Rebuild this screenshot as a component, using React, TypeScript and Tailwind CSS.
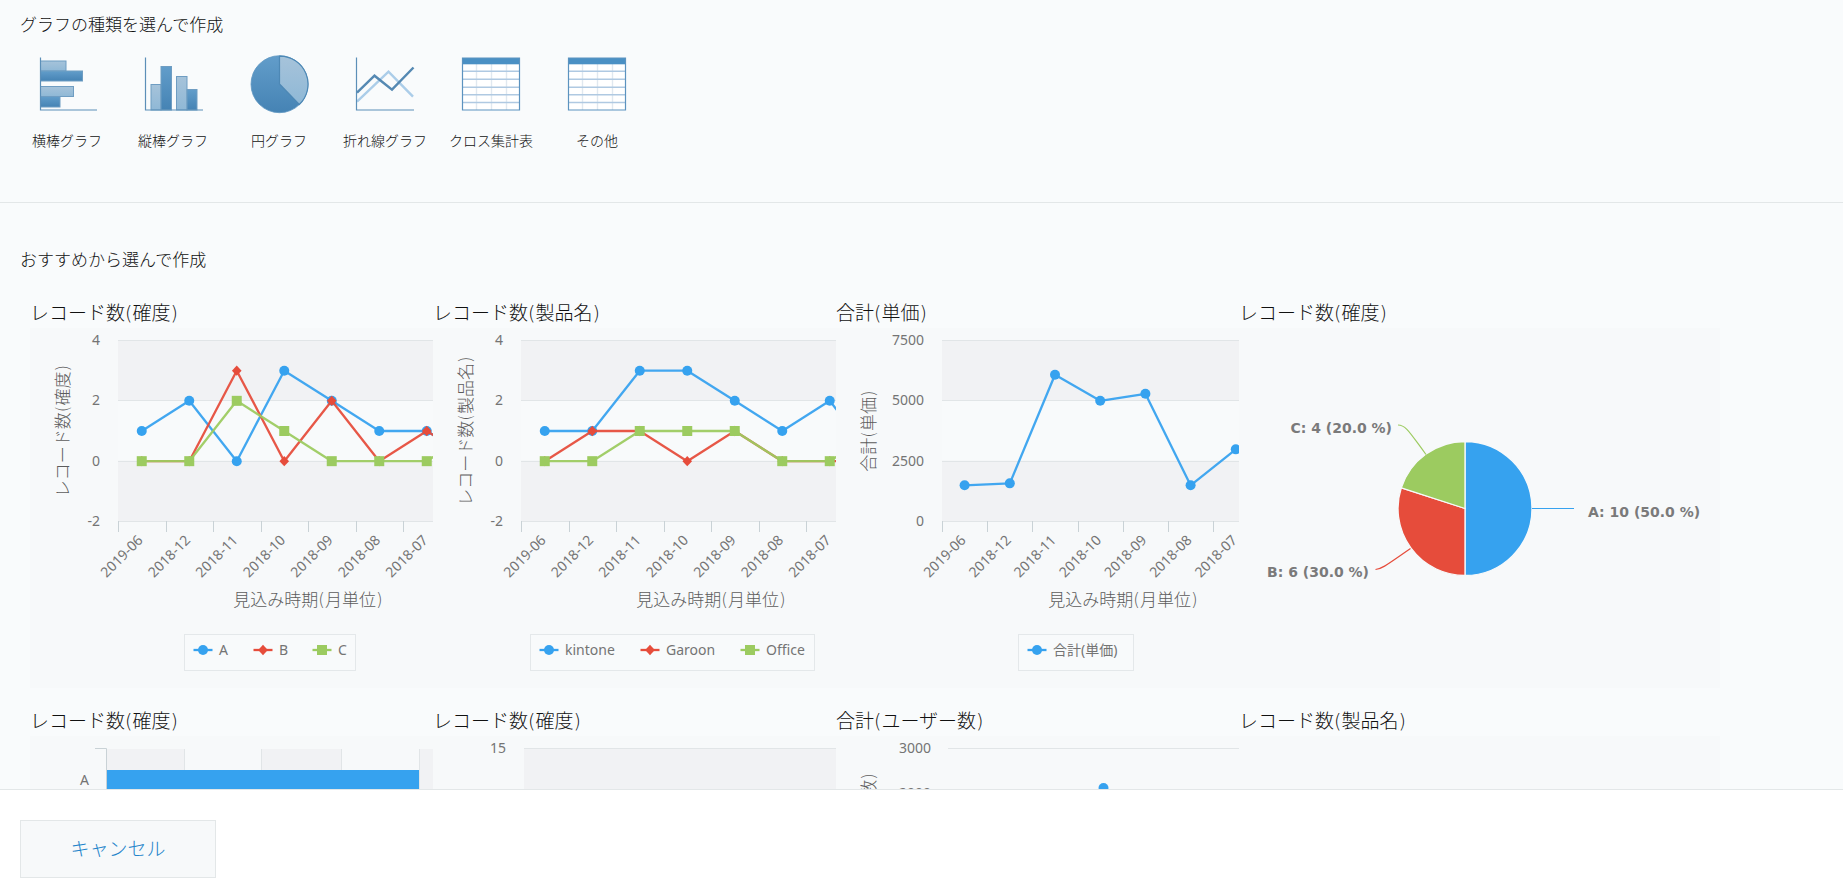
import React from "react";

const BLUE = "#36a2ef";
const RED = "#e64c3b";
const GREEN = "#9ccb60";

const UI_FONT = "font-['Noto_Sans','Noto_Sans_CJK_JP',sans-serif]";
const WIDE_FONT = "font-['DejaVu_Sans','Noto_Sans_CJK_JP',sans-serif]";

type MarkerShape = "circle" | "diamond" | "square";
type Series = { name: string; color: string; shape: MarkerShape; values: number[] };

function Marker({ shape, x, y, color }: { shape: MarkerShape; x: number; y: number; color: string }) {
  if (shape === "circle") return <circle cx={x} cy={y} r={5} fill={color} />;
  if (shape === "square") return <rect x={x - 5} y={y - 5} width={10} height={10} fill={color} />;
  return <path d={`M${x} ${y - 5.2}L${x + 4.8} ${y}L${x} ${y + 5.2}L${x - 4.8} ${y}Z`} fill={color} />;
}

const MONTHS = ["2019-06", "2018-12", "2018-11", "2018-10", "2018-09", "2018-08", "2018-07"];
const TOP = 12;
const PLOT_HEIGHT = 181;

function ChartSvg({ label, children }: { label: string; children: React.ReactNode }) {
  return (
    <svg width="481" height="360" viewBox="-2 0 481 360" role="img" aria-label={label} className={`block shrink-0 ${UI_FONT}`}>
      {children}
    </svg>
  );
}

type LineChartProps = {
  yTitle: string;
  left: number;
  step: number;
  labelRight: number;
  ticks: number[];
  titleX: number;
  legend: { x: number; width: number; items: number[] };
  series: Series[];
};

function LineChart({ yTitle, left, step, labelRight, ticks, titleX, legend, series }: LineChartProps) {
  const max = ticks[0];
  const min = ticks[ticks.length - 1];
  const yOf = (v: number) => TOP + ((max - v) / (max - min)) * PLOT_HEIGHT;
  const xOf = (i: number) => left + step * (i + 0.5);
  return (
    <ChartSvg label={yTitle}>
      <rect x={left} y={yOf(ticks[0])} width={420} height={PLOT_HEIGHT / 3} fill="#f1f2f4" />
      <rect x={left} y={yOf(ticks[1])} width={420} height={PLOT_HEIGHT / 3} fill="#f8fafb" />
      <rect x={left} y={yOf(ticks[2])} width={420} height={PLOT_HEIGHT / 3} fill="#f1f2f4" />
      {ticks.map((t) => (
        <g key={t}>
          <line x1={left} x2={479} y1={Math.round(yOf(t)) + 0.5} y2={Math.round(yOf(t)) + 0.5} stroke="#e1e5e7" />
          <text x={labelRight} y={Math.round(yOf(t)) + 5} textAnchor="end" fontSize={14} fill="#747474">
            {t}
          </text>
        </g>
      ))}
      {MONTHS.map((m, i) => (
        <g key={m}>
          <line x1={Math.round(left + step * i) + 0.5} x2={Math.round(left + step * i) + 0.5} y1={193} y2={204} stroke="#c9d2d6" />
          <text x={xOf(i) + 2} y={213} textAnchor="end" fontSize={14} fill="#747474" transform={`rotate(-45 ${xOf(i) + 2} 213)`}>
            {m}
          </text>
        </g>
      ))}
      {series.map((s) => (
        <g key={s.name}>
          <polyline
            points={s.values.map((v, i) => `${xOf(i)},${yOf(v) + 0.5}`).join(" ")}
            fill="none"
            stroke={s.color}
            strokeWidth={2.3}
            strokeOpacity={0.94}
            strokeLinejoin="round"
          />
          {s.values.map((v, i) => (
            <Marker key={i} shape={s.shape} x={xOf(i)} y={yOf(v) + 0.5} color={s.color} />
          ))}
        </g>
      ))}
      <g className={WIDE_FONT} fontSize={17} fontWeight={300} textAnchor="middle" fill="#5c5c5c">
        <text x={37} y={103} transform="rotate(-90 37 103)">
          {yTitle}
        </text>
        <text x={titleX} y={278}>
          見込み時期(月単位)
        </text>
      </g>
      <rect x={legend.x + 0.5} y={306.5} width={legend.width} height={36} fill="#f8fafb" stroke="#e4e8ea" />
      {series.map((s, i) => (
        <g key={s.name}>
          <line x1={legend.items[i] - 9.5} x2={legend.items[i] + 9.5} y1={322} y2={322} stroke={s.color} strokeWidth={2.3} />
          <Marker shape={s.shape} x={legend.items[i]} y={322} color={s.color} />
          <text x={legend.items[i] + 16} y={327} fontSize={14} fill="#747474">
            {s.name}
          </text>
        </g>
      ))}
    </ChartSvg>
  );
}

function PieChart() {
  return (
    <ChartSvg label="レコード数(確度)">
      <g stroke="#f7f9fa" strokeWidth={1.3}>
        <path d="M224 180.500V113.500A67 67 0 0 1 224 247.500Z" fill={BLUE} />
        <path d="M224 180.500V247.500A67 67 0 0 1 160.300 159.800Z" fill={RED} />
        <path d="M224 180.500L160.300 159.800A67 67 0 0 1 224 113.500Z" fill={GREEN} />
      </g>
      <g fill="none" strokeWidth={1.2}>
        <path d="M291 180.500H333" stroke={BLUE} />
        <path d="M134.500 241.500C141 241 147 236 169.500 220.500" stroke={RED} />
        <path d="M157 97C165 97 169 105 185 126.500" stroke={GREEN} />
      </g>
      <g className={WIDE_FONT} fontSize={14} fontWeight={700} fill="#7a7a7a">
        <text x={347} y={189}>A: 10 (50.0 %)</text>
        <text x={128} y={249} textAnchor="end">B: 6 (30.0 %)</text>
        <text x={151} y={105} textAnchor="end">C: 4 (20.0 %)</text>
      </g>
    </ChartSvg>
  );
}

function BarChart() {
  return (
    <ChartSvg label="レコード数(確度)">
      <g fill="#f1f2f4">
        <rect x={75} y={13} width={78} height={347} />
        <rect x={230} y={13} width={80} height={347} />
        <rect x={387} y={13} width={80} height={347} />
      </g>
      <path d="M152.500 13V360M229.500 13V360M309.500 13V360M387.500 13V360" stroke="#e1e5e7" />
      <path d="M63 12.500H74.500V360" fill="none" stroke="#c9d2d6" />
      <rect x={75} y={34} width={312} height={34} fill={BLUE} />
      <text x={57} y={49} textAnchor="end" fontSize={14} fill="#747474">A</text>
    </ChartSvg>
  );
}

function ColumnChart() {
  return (
    <ChartSvg label="レコード数(確度)">
      <rect x={89} y={13} width={390} height={60} fill="#f1f2f4" />
      <line x1={89} x2={479} y1={12.5} y2={12.5} stroke="#e1e5e7" />
      <text x={71} y={17} textAnchor="end" fontSize={14} fill="#747474">15</text>
    </ChartSvg>
  );
}

function UserTotalChart() {
  return (
    <ChartSvg label="合計(ユーザー数)">
      <line x1={110} x2={479} y1={12.5} y2={12.5} stroke="#e1e5e7" />
      <g fontSize={14} textAnchor="end" fill="#747474">
        <text x={93} y={17}>3000</text>
        <text x={93} y={62}>2000</text>
      </g>
      <text
        x={37}
        y={103}
        className={WIDE_FONT}
        textAnchor="middle"
        fontSize={17}
        fontWeight={300}
        fill="#5c5c5c"
        transform="rotate(-90 37 103)"
      >
        合計(ユーザー数)
      </text>
      <circle cx={265.5} cy={52} r={5} fill={BLUE} />
    </ChartSvg>
  );
}

/* Chart type icons */

function IconSvg({ children }: { children: React.ReactNode }) {
  return (
    <svg width="60" height="60" viewBox="0 0 60 60" aria-hidden="true" className="block">
      <defs>
        <linearGradient id="icon-dark" x1="0" y1="0" x2="0" y2="1">
          <stop offset="0" stopColor="#629dca" />
          <stop offset="1" stopColor="#4583b4" />
        </linearGradient>
        <linearGradient id="icon-light" x1="0" y1="0" x2="0" y2="1">
          <stop offset="0" stopColor="#a6c3da" />
          <stop offset="1" stopColor="#8fb8d6" />
        </linearGradient>
      </defs>
      {children}
    </svg>
  );
}

const DARK = "url(#icon-dark)";
const LIGHT = "url(#icon-light)";

const HorizontalBarIcon = () => (
  <IconSvg>
    <g stroke="#6f9dc2" strokeWidth={1}>
      <rect x={3.5} y={7} width={25.5} height={10} fill={LIGHT} />
      <rect x={3.5} y={17} width={42} height={10} fill={DARK} />
      <rect x={3.5} y={32.5} width={33} height={10} fill={LIGHT} />
      <rect x={3.5} y={42.5} width={19.5} height={10.5} fill={DARK} />
    </g>
    <path d="M3.500 3.500V56H60" fill="none" stroke="#5c8fb8" strokeWidth={1.2} />
  </IconSvg>
);

const VerticalBarIcon = () => (
  <IconSvg>
    <g stroke="#6f9dc2" strokeWidth={1}>
      <rect x={8} y={30.5} width={10} height={25.5} fill={LIGHT} />
      <rect x={18} y={12.5} width={10.5} height={43.5} fill={DARK} />
      <rect x={33.5} y={22.5} width={10.5} height={33.5} fill={LIGHT} />
      <rect x={44} y={35.5} width={10} height={20.5} fill={DARK} />
    </g>
    <path d="M2.500 3.500V56H60" fill="none" stroke="#5c8fb8" strokeWidth={1.2} />
  </IconSvg>
);

const PieIcon = () => (
  <IconSvg>
    <circle cx={30.5} cy={30.2} r={28.5} fill={DARK} stroke="#5f97c2" strokeWidth={0.8} />
    <path d="M30.500 30V2.200A28 28 0 0 1 50.300 50.500Z" fill={LIGHT} stroke="#4d88b5" strokeWidth={1.2} strokeLinejoin="round" />
  </IconSvg>
);

const LineIcon = () => (
  <IconSvg>
    <path d="M2 47.700L33.500 17.700L58 42.700" fill="none" stroke="#abcde9" strokeWidth={2.4} />
    <path d="M2 38.700L19.500 21.700L37 35.700L58.500 13.500" fill="none" stroke="#5589b3" strokeWidth={2.4} />
    <path d="M1.500 3.500V56H59" fill="none" stroke="#5c8fb8" strokeWidth={1.2} />
  </IconSvg>
);

const TableIcon = () => (
  <IconSvg>
    <rect x={1.5} y={4} width={57} height={52} fill="#ffffff" />
    <path d="M15.500 10V56M30.500 10V56M45.500 10V56" stroke="#e0e8f0" strokeWidth={1.4} />
    <path d="M2 17.300H58M2 25.200H58M2 33.200H58M2 40.800H58M2 48.600H58" stroke="#afc9e2" strokeWidth={1.5} />
    <rect x={1.5} y={4} width={57} height={6.3} fill="#4a90c4" />
    <path d="M1.500 4H58.500V56H1.500Z" fill="none" stroke="#5c93bf" strokeWidth={1.2} />
  </IconSvg>
);

const CHART_TYPES = [
  { label: "横棒グラフ", Icon: HorizontalBarIcon },
  { label: "縦棒グラフ", Icon: VerticalBarIcon },
  { label: "円グラフ", Icon: PieIcon },
  { label: "折れ線グラフ", Icon: LineIcon },
  { label: "クロス集計表", Icon: TableIcon },
  { label: "その他", Icon: TableIcon },
];

const recordsByRank = (
  <LineChart
    yTitle="レコード数(確度)"
    left={86}
    step={47.5}
    labelRight={68}
    ticks={[4, 2, 0, -2]}
    titleX={276}
    legend={{ x: 152, width: 171, items: [171, 231, 290] }}
    series={[
      { name: "A", color: BLUE, shape: "circle", values: [1, 2, 0, 3, 2, 1, 1, 0] },
      { name: "B", color: RED, shape: "diamond", values: [0, 0, 3, 0, 2, 0, 1, 0] },
      { name: "C", color: GREEN, shape: "square", values: [0, 0, 2, 1, 0, 0, 0, 1] },
    ]}
  />
);

const recordsByProduct = (
  <LineChart
    yTitle="レコード数(製品名)"
    left={86}
    step={47.5}
    labelRight={68}
    ticks={[4, 2, 0, -2]}
    titleX={276}
    legend={{ x: 95, width: 284, items: [114, 215, 315] }}
    series={[
      { name: "kintone", color: BLUE, shape: "circle", values: [1, 1, 3, 3, 2, 1, 2, 0] },
      { name: "Garoon", color: RED, shape: "diamond", values: [0, 1, 1, 0, 1, 0, 0, 0] },
      { name: "Office", color: GREEN, shape: "square", values: [0, 0, 1, 1, 1, 0, 0, 1] },
    ]}
  />
);

const unitPriceTotal = (
  <LineChart
    yTitle="合計(単価)"
    left={104}
    step={45.2}
    labelRight={86}
    ticks={[7500, 5000, 2500, 0]}
    titleX={285}
    legend={{ x: 180, width: 115, items: [199] }}
    series={[
      { name: "合計(単価)", color: BLUE, shape: "circle", values: [1500, 1580, 6080, 5000, 5290, 1500, 2990, 1500] },
    ]}
  />
);

const ROWS = [
  [
    { title: "レコード数(確度)", chart: recordsByRank },
    { title: "レコード数(製品名)", chart: recordsByProduct },
    { title: "合計(単価)", chart: unitPriceTotal },
    { title: "レコード数(確度)", chart: <PieChart /> },
  ],
  [
    { title: "レコード数(確度)", chart: <BarChart /> },
    { title: "レコード数(確度)", chart: <ColumnChart /> },
    { title: "合計(ユーザー数)", chart: <UserTotalChart /> },
    { title: "レコード数(製品名)", chart: <ChartSvg label="レコード数(製品名)">{null}</ChartSvg> },
  ],
];

export default function App() {
  return (
    <div className={`flex h-screen flex-col bg-white text-[#111111] ${UI_FONT}`}>
      <main className="min-h-0 flex-1 overflow-auto bg-[#f9fbfc] [scrollbar-width:none]">
        <section className="border-b border-[#e3e7e8] pt-3 pb-[51px]">
          <h2 className="px-5 text-[17px] leading-[26px] font-light">グラフの種類を選んで作成</h2>
          <div className="mt-4 flex pl-3.5">
            {CHART_TYPES.map(({ label, Icon }) => (
              <button key={label} type="button" className="flex w-[106px] cursor-pointer flex-col items-center gap-[17px]">
                <Icon />
                <span className="text-sm leading-5 font-light whitespace-nowrap">{label}</span>
              </button>
            ))}
          </div>
        </section>

        <section className="pt-11 pb-10">
          <h2 className="px-5 text-[17px] leading-[26px] font-light">おすすめから選んで作成</h2>
          <div className="mt-[23px] flex flex-col gap-4 pl-[30px]">
            {ROWS.map((row, r) => (
              <div key={r} className="flex">
                {row.map((card, c) => (
                  <article key={c} className="w-[403px] shrink-0 overflow-hidden last:w-[481px]">
                    <h3 className={`h-8 text-[19px] leading-[34px] font-light ${WIDE_FONT}`}>{card.title}</h3>
                    <div className="flex overflow-hidden bg-[#f7f9fa]">{card.chart}</div>
                  </article>
                ))}
              </div>
            ))}
          </div>
        </section>
      </main>

      <footer className="border-t border-[#e3e7e8] bg-white px-5 pt-[30px] pb-px">
        <button
          type="button"
          className="h-[58px] w-[196px] cursor-pointer border border-[#e3e7e8] bg-[#f7f9fa] text-[19px] font-light text-[#2384ca]"
        >
          キャンセル
        </button>
      </footer>
    </div>
  );
}
